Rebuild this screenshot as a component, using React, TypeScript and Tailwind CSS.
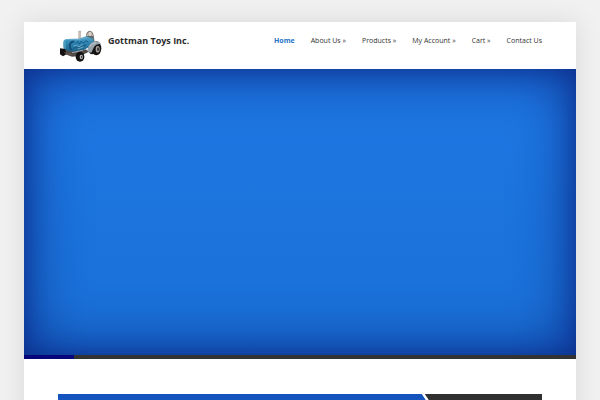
const navItems = [
    { label: "Home", href: "#home", active: true },
    { label: "About Us »", href: "#about" },
    { label: "Products »", href: "#products" },
    { label: "My Account »", href: "#account" },
    { label: "Cart »", href: "#cart" },
    { label: "Contact Us", href: "#contact" },
];

const TractorLogo: React.FC = () => (
    <svg className="w-[42px] h-8 shrink-0" viewBox="12 12 126 96" aria-hidden="true">
        <defs>
            <linearGradient id="hood" x1="0" y1="0" x2="0" y2="1">
                <stop offset="0" stopColor="#5ba6c9" />
                <stop offset="0.4" stopColor="#2e86b3" />
                <stop offset="1" stopColor="#1b5b80" />
            </linearGradient>
        </defs>
        {/* Rear wheels */}
        <ellipse cx="108" cy="66" rx="12" ry="19" fill="#1c1a1a" />
        <ellipse cx="121" cy="67" rx="15" ry="21" fill="#151313" />
        <ellipse cx="125" cy="70" rx="6" ry="10" fill="#a9a6a3" />
        <ellipse cx="126" cy="70" rx="3" ry="6" fill="#3a3636" />
        {/* Seat and roll cage */}
        <path d="M92 44V24q2-8 9-8t10 9l3 20" fill="none" stroke="#82796f" strokeWidth="3" />
        <ellipse cx="102" cy="24" rx="7" ry="8" fill="#d8d2ca" stroke="#6b6259" strokeWidth="2" />
        <path d="M92 30h20l3 18H90z" fill="#5c6a70" />
        <path d="M68 41V15h6v26z" fill="#cfc2b9" stroke="#8d7e77" strokeWidth="1" />
        {/* Hood */}
        <path d="M22 48q1-8 11-9l35-1 22-7 21 7 4 15-30 18-26 9-35-5q-3-14-2-27z" fill="url(#hood)" />
        <path d="M26 44q4-4 12-4l34 0 20-6" fill="none" stroke="#79b8d3" strokeWidth="2" />
        <path d="M46 72q-7-8-4-17 3-9 13-8" fill="none" stroke="#144a75" strokeWidth="5" />
        <path d="M60 52l5-6 5 8 6-9 5 7 9-8 7 4M54 66l9-3 7 3 10-8 10 0" fill="none" stroke="#185b89" strokeWidth="3" />
        <path d="M52 60l9-2 8 4 12-8M65 69l17-6" fill="none" stroke="#8fc4da" strokeWidth="2" />
        <path d="M27 47v24" stroke="#65b1d0" strokeWidth="3" />
        {/* Fender and frame */}
        <path d="M98 60q8-13 23-14 10 0 14 9-14-3-21 8l-8 17-14-2z" fill="#98a4ac" />
        <path d="M100 62q8-10 20-12" fill="none" stroke="#d2d9dd" strokeWidth="2" />
        <path d="M20 71l41 8 29-9 7 8-24 12-25 2-28-10z" fill="#504b49" />
        <path d="M48 80l32-7" stroke="#aaa7a5" strokeWidth="3" />
        <path d="M12 67l16 2 3 16-10 6-9-6z" fill="#151010" />
        <path d="M25 80l22 6" stroke="#6c5a54" strokeWidth="3" />
        {/* Front wheel */}
        <ellipse cx="72" cy="92" rx="13" ry="15" fill="#141212" />
        <ellipse cx="76" cy="93" rx="5" ry="7" fill="#b9b7b6" />
        <ellipse cx="77" cy="93" rx="2" ry="4" fill="#443f3e" />
    </svg>
);

const Header: React.FC = () => (
    <header className="flex items-start justify-between px-[34px] pt-2 pb-[7px]">
        <a href="#home" className="flex items-start gap-[6px] pl-[2px]">
            <TractorLogo />
            <span className="pt-[3px] text-[9px] leading-4 font-bold text-[#2b2b2b] whitespace-nowrap">
                Gottman Toys Inc.
            </span>
        </a>
        <nav className="flex gap-4 pt-1">
            {navItems.map((item) => (
                <a
                    key={item.label}
                    href={item.href}
                    className={`text-[7px] leading-[14px] whitespace-nowrap ${item.active ? "font-bold text-[#1e73c9]" : "text-[#333333]"}`}
                >
                    {item.label}
                </a>
            ))}
        </nav>
    </header>
);

const Hero: React.FC = () => (
    <section aria-label="Featured">
        <div className="aspect-[552/286] bg-linear-to-b from-[#1e78e4] to-[#1a70d6] shadow-[inset_0_0_60px_#0b2a86,inset_0_0_20px_rgba(11,30,120,0.5)]" />
        {/* Slide timer */}
        <div className="h-1 bg-[#333333]">
            <div className="h-full w-[9%] bg-[#06067a]" />
        </div>
    </section>
);

const Callout: React.FC = () => (
    <section className="mx-[34px] mt-[35px] flex h-24 bg-[#303030]" aria-label="Callout">
        <div className="w-[89%] bg-white [clip-path:polygon(0_0,calc(100%_-_64px)_0,100%_100%,0_100%)]">
            <div className="h-full bg-linear-to-b from-[#1453bd] to-[#1a6fd6] [clip-path:polygon(0_0,calc(100%_-_67px)_0,calc(100%_-_3px)_100%,0_100%)]" />
        </div>
    </section>
);

const App: React.FC = () => {
    return (
        <div className="h-screen overflow-hidden bg-[#f1f1f1] px-6 pt-[22px] font-['Open_Sans',sans-serif]">
            <div className="min-h-full bg-white shadow-[0_0_25px_rgba(0,0,0,0.1)]">
                <Header />
                <Hero />
                <Callout />
            </div>
        </div>
    );
};

export default App;
